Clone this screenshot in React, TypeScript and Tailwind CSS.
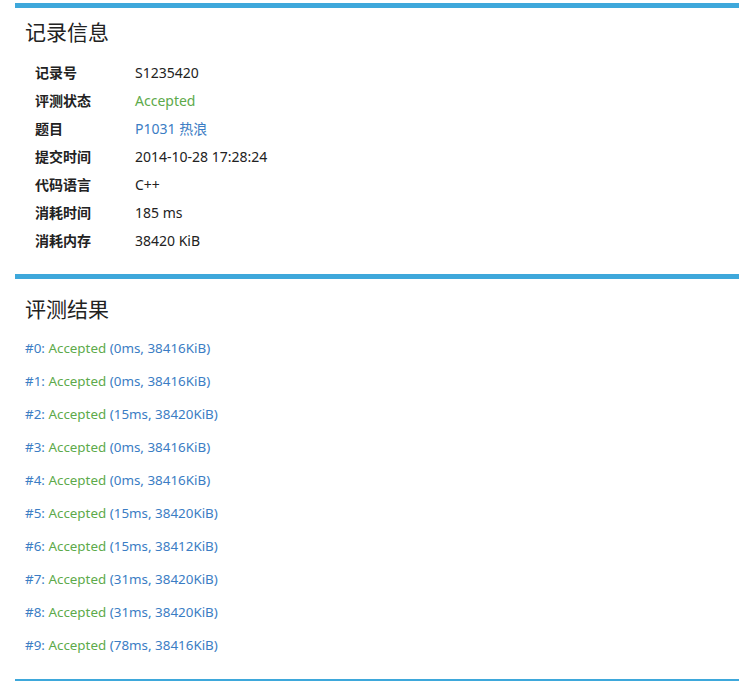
import React from "react";

const info: { label: string; value: string; tone?: "green" | "blue" }[] = [
  { label: "记录号", value: "S1235420" },
  { label: "评测状态", value: "Accepted", tone: "green" },
  { label: "题目", value: "P1031 热浪", tone: "blue" },
  { label: "提交时间", value: "2014-10-28 17:28:24" },
  { label: "代码语言", value: "C++" },
  { label: "消耗时间", value: "185 ms" },
  { label: "消耗内存", value: "38420 KiB" },
];

const results = [
  ["0ms", "38416KiB"],
  ["0ms", "38416KiB"],
  ["15ms", "38420KiB"],
  ["0ms", "38416KiB"],
  ["0ms", "38416KiB"],
  ["15ms", "38420KiB"],
  ["15ms", "38412KiB"],
  ["31ms", "38420KiB"],
  ["31ms", "38420KiB"],
  ["78ms", "38416KiB"],
];

const font = { fontFamily: '"Noto Sans", "Noto Sans CJK SC", sans-serif' };

function App() {
  return (
    <div className="bg-white min-h-screen pt-[3px] pl-[15px] pr-[3px] text-[#222]" style={font}>
      {/* 记录信息 */}
      <div className="border-t-[5px] border-[#3ea8db]">
        <div className="pl-[10px] pt-[6px] pb-[20px]">
          <h2 className="text-[21px] leading-[36px] font-normal mb-[8px]">记录信息</h2>
          <table className="ml-[10px] text-[14px]">
            <tbody>
              {info.map((row) => (
                <tr key={row.label} className="h-[28px]">
                  <td className="w-[100px] font-bold text-[14px]">{row.label}</td>
                  <td
                    className={
                      row.tone === "green"
                        ? "text-[#5daa4b]"
                        : row.tone === "blue"
                        ? "text-[#3b7dc4]"
                        : ""
                    }
                  >
                    {row.value}
                  </td>
                </tr>
              ))}
            </tbody>
          </table>
        </div>
      </div>

      {/* 评测结果 */}
      <div className="border-t-[5px] border-[#3ea8db]">
        <div className="pl-[10px] pt-[12px] pb-[11px]">
          <h2 className="text-[21px] leading-[36px] font-normal mb-[11px]">评测结果</h2>
          <div className="flex flex-col text-[13.4px]">
            {results.map(([time, mem], i) => (
              <div key={i} className="h-[33px] leading-[20px] text-[#3b7dc4]">
                #{i}: <span className="text-[#5daa4b]">Accepted</span> ({time}, {mem})
              </div>
            ))}
          </div>
        </div>
      </div>
      <div className="border-t-[5px] border-[#3ea8db]" />
    </div>
  );
}

export default App;
